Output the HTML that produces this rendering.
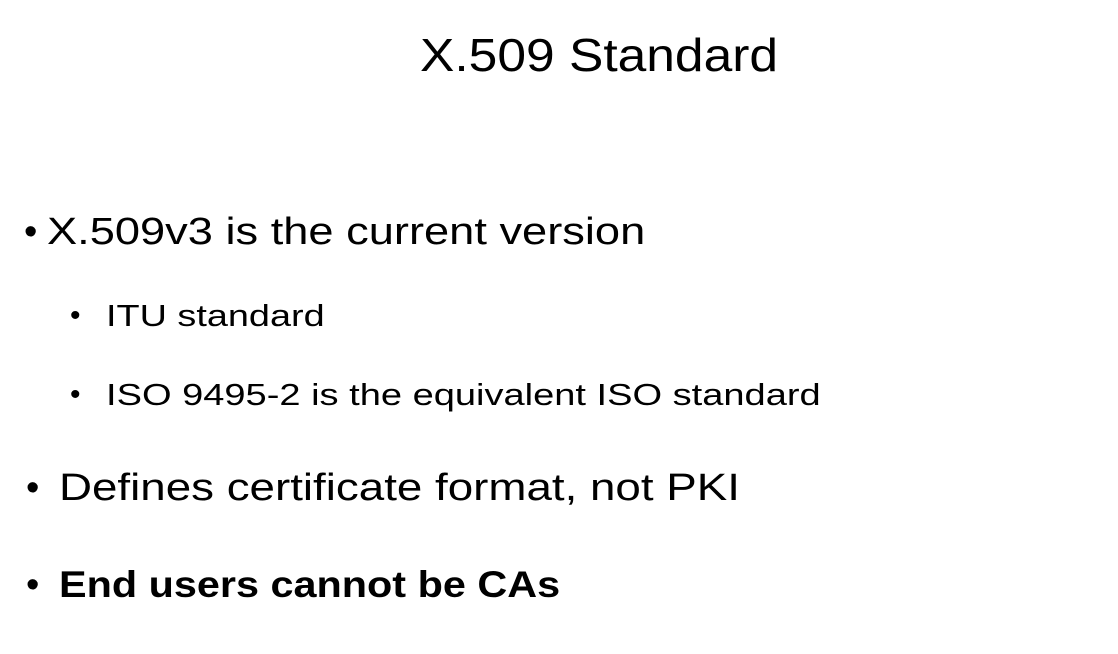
<!DOCTYPE html>
<html><head><meta charset="utf-8"><style>
html,body{margin:0;padding:0;background:#fff;}
body{width:1118px;height:654px;position:relative;overflow:hidden;font-family:"Liberation Sans",sans-serif;color:#000;}
.t{position:absolute;white-space:nowrap;line-height:1;transform-origin:0 0;}
</style></head><body>
<div class="t" style="left:420px;top:32px;font-size:46px;transform:scaleX(1.12);">X.509 Standard</div>

<div class="t" style="left:24px;top:213px;font-size:38px;">•</div>
<div class="t" style="left:47px;top:213px;font-size:38px;transform:scaleX(1.19);">X.509v3 is the current version</div>

<div class="t" style="left:70px;top:301px;font-size:30px;">•</div>
<div class="t" style="left:106px;top:300px;font-size:31px;transform:scaleX(1.22);">ITU standard</div>

<div class="t" style="left:70px;top:380px;font-size:30px;">•</div>
<div class="t" style="left:106px;top:379px;font-size:31px;transform:scaleX(1.227);">ISO 9495-2 is the equivalent ISO standard</div>

<div class="t" style="left:26px;top:469px;font-size:38px;">•</div>
<div class="t" style="left:59px;top:469px;font-size:38px;transform:scaleX(1.203);">Defines certificate format, not PKI</div>

<div class="t" style="left:26px;top:566px;font-size:38px;">•</div>
<div class="t" style="left:59px;top:566px;font-size:37px;font-weight:bold;transform:scaleX(1.118);">End users cannot be CAs</div>
</body></html>
